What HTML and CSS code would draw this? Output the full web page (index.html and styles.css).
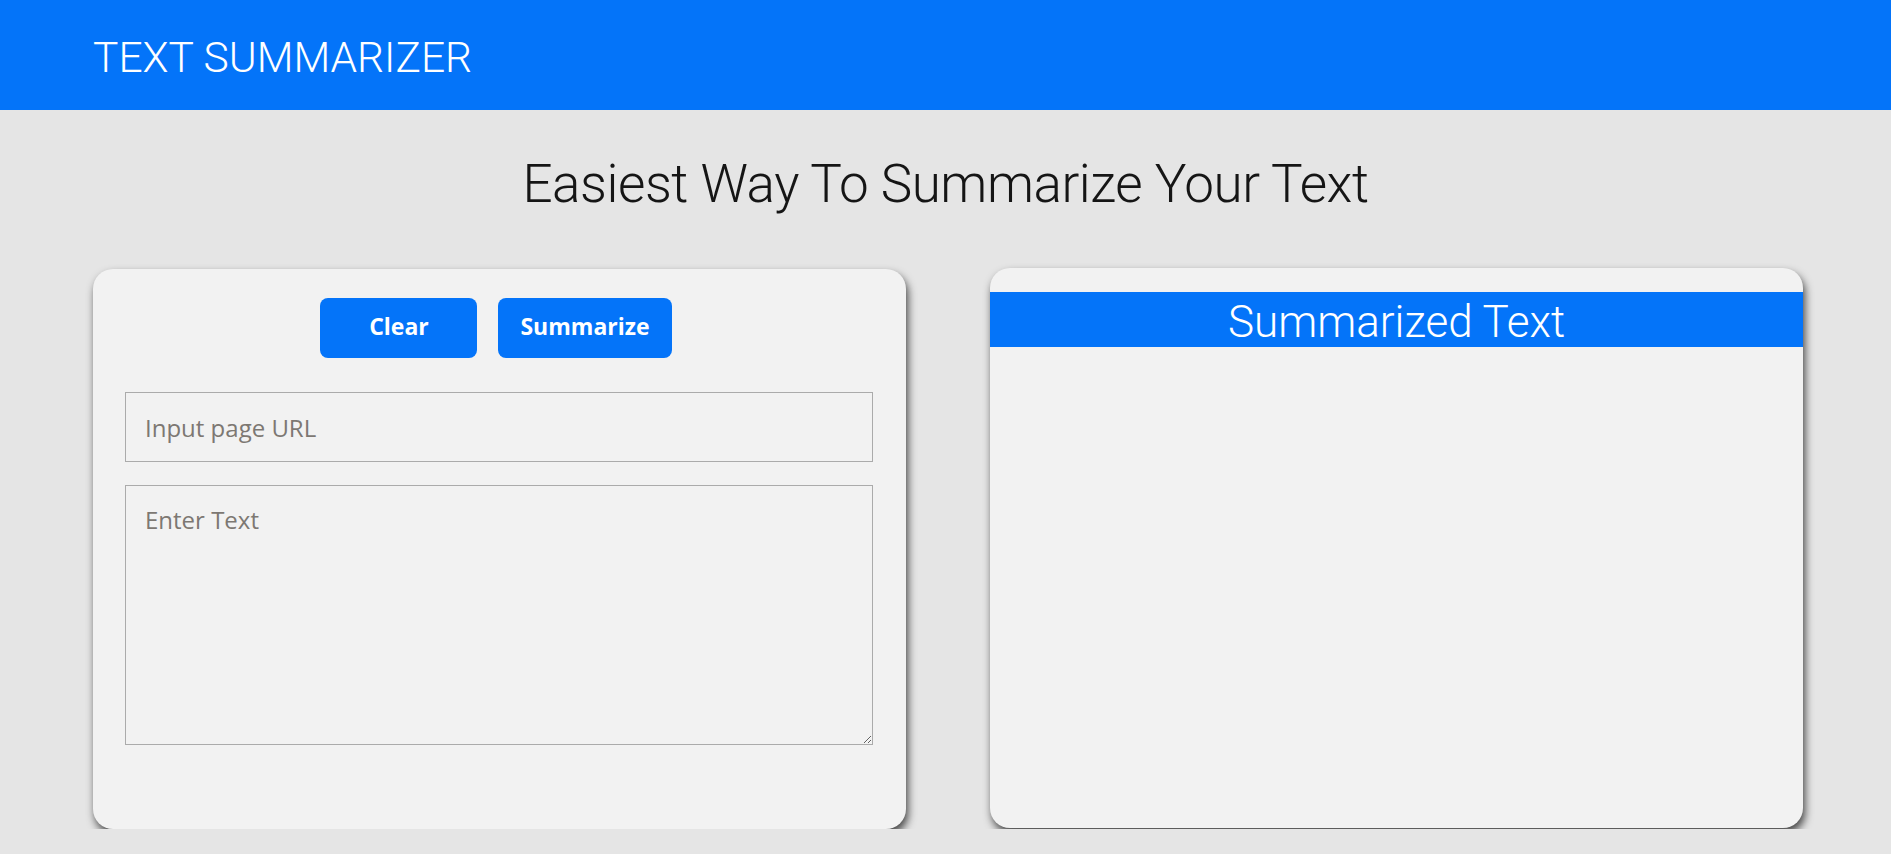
FILE: index.html
```html
<!DOCTYPE html>
<html lang="en">
<head>
<meta charset="utf-8">
<title>Text Summarizer</title>
<link rel="stylesheet" href="styles.css">
</head>
<body>
<header class="topbar">
  <h1 class="brand">TEXT SUMMARIZER</h1>
</header>
<main class="page">
  <h2 class="headline">Easiest Way To Summarize Your Text</h2>
  <section class="panels">
    <div class="card card-input">
      <div class="actions">
        <button class="btn btn-clear" type="button">Clear</button>
        <button class="btn" type="button">Summarize</button>
      </div>
      <input class="field url-field" type="text" placeholder="Input page URL">
      <textarea class="field text-field" placeholder="Enter Text"></textarea>
    </div>
    <div class="card card-output">
      <div class="output-title">Summarized Text</div>
      <div class="output-body"></div>
    </div>
  </section>
</main>
</body>
</html>
```
FILE: styles.css
```css
* { box-sizing: border-box; }

html, body {
  margin: 0;
  padding: 0;
  background: #e5e5e5;
  font-family: Roboto, "Liberation Sans", sans-serif;
  overflow: hidden;
}

.topbar {
  height: 110px;
  background: #0474f9;
  display: flex;
  align-items: center;
  padding-left: 93px;
}

.brand {
  margin: 5px 0 0 0;
  font-family: Roboto, sans-serif;
  font-weight: 300;
  font-size: 42.5px;
  color: #ffffff;
}

.headline {
  margin: 42px 0 53px 0;
  text-align: center;
  font-family: Roboto, sans-serif;
  font-weight: 300;
  font-size: 53px;
  line-height: 64px;
  color: #151515;
  letter-spacing: -0.45px;
}

.panels {
  display: flex;
  justify-content: space-between;
  align-items: flex-start;
  padding: 0 88px 0 93px;
}

.card {
  width: 813px;
  height: 560px;
  background: #f2f2f2;
  border-radius: 20px;
  box-shadow: 2px 5px 8px rgba(0, 0, 0, 0.7);
}

.card-input {
  padding: 29px 33px 0 32px;
  display: flex;
  flex-direction: column;
}

.actions {
  display: flex;
  justify-content: center;
  gap: 21px;
  margin-bottom: 34px;
  padding-right: 6px;
}

.btn {
  height: 60px;
  padding: 0 22px 4px;
  border: none;
  border-radius: 8px;
  background: #0474f9;
  color: #fff;
  font-family: "Open Sans", sans-serif;
  font-weight: 700;
  font-size: 23px;
}

.btn-clear { width: 157px; }

.field {
  width: 100%;
  background: transparent;
  border: 1px solid #ababab;
  font-family: "Open Sans", sans-serif;
  font-size: 24px;
  color: #333;
  outline: none;
}

.field::placeholder { color: #7d7873; }

.url-field {
  height: 70px;
  padding: 0 19px;
  margin-bottom: 23px;
}

.text-field {
  height: 260px;
  padding: 17px 19px;
  resize: vertical;
}

.card-output {
  margin-top: -1px;
  padding-top: 24px;
}

.output-title {
  height: 55px;
  background: #0474f9;
  color: #fff;
  text-align: center;
  font-family: Roboto, sans-serif;
  font-weight: 300;
  font-size: 44px;
  line-height: 60px;
}
```
